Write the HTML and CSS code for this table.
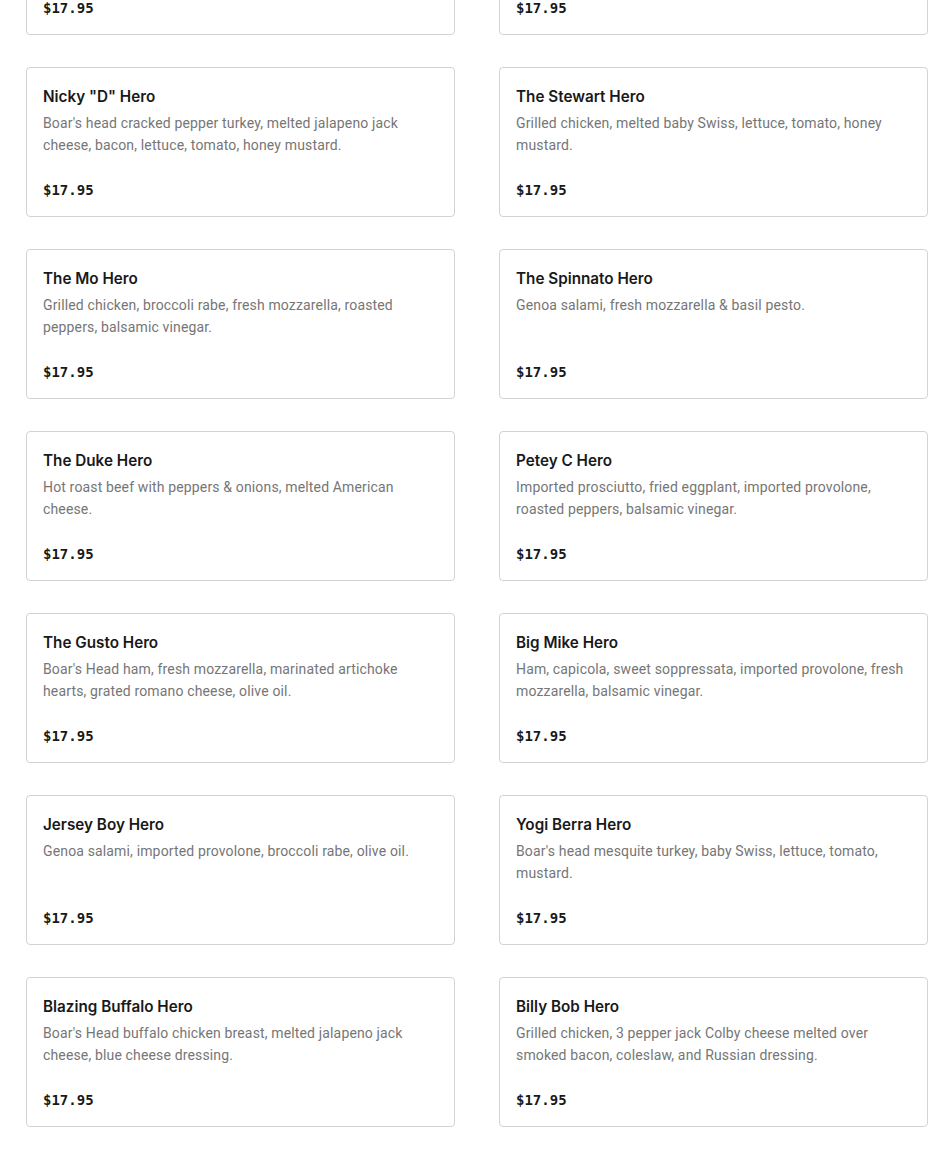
FILE: index.html
```html
<!DOCTYPE html>
<html lang="en">
<head>
<meta charset="utf-8">
<title>Heroes</title>
<link rel="stylesheet" href="styles.css">
</head>
<body>
<main class="menu">
  <div class="card"><h3 class="title">The Sal Hero</h3><p class="desc">Boar's Head ham, salami, provolone, lettuce, tomato.</p><div class="price">$17.95</div></div>
  <div class="card"><h3 class="title">The Joey Hero</h3><p class="desc">Grilled chicken, fresh mozzarella, roasted peppers.</p><div class="price">$17.95</div></div>

  <div class="card"><h3 class="title">Nicky "D" Hero</h3><p class="desc">Boar's head cracked pepper turkey, melted jalapeno jack cheese, bacon, lettuce, tomato, honey mustard.</p><div class="price">$17.95</div></div>
  <div class="card"><h3 class="title">The Stewart Hero</h3><p class="desc">Grilled chicken, melted baby Swiss, lettuce, tomato, honey mustard.</p><div class="price">$17.95</div></div>

  <div class="card"><h3 class="title">The Mo Hero</h3><p class="desc">Grilled chicken, broccoli rabe, fresh mozzarella, roasted peppers, balsamic vinegar.</p><div class="price">$17.95</div></div>
  <div class="card"><h3 class="title">The Spinnato Hero</h3><p class="desc">Genoa salami, fresh mozzarella &amp; basil pesto.</p><div class="price">$17.95</div></div>

  <div class="card"><h3 class="title">The Duke Hero</h3><p class="desc">Hot roast beef with peppers &amp; onions, melted American cheese.</p><div class="price">$17.95</div></div>
  <div class="card"><h3 class="title">Petey C Hero</h3><p class="desc">Imported prosciutto, fried eggplant, imported provolone, roasted peppers, balsamic vinegar.</p><div class="price">$17.95</div></div>

  <div class="card"><h3 class="title">The Gusto Hero</h3><p class="desc">Boar's Head ham, fresh mozzarella, marinated artichoke hearts, grated romano cheese, olive oil.</p><div class="price">$17.95</div></div>
  <div class="card"><h3 class="title">Big Mike Hero</h3><p class="desc">Ham, capicola, sweet soppressata, imported provolone, fresh mozzarella, balsamic vinegar.</p><div class="price">$17.95</div></div>

  <div class="card"><h3 class="title">Jersey Boy Hero</h3><p class="desc">Genoa salami, imported provolone, broccoli rabe, olive oil.</p><div class="price">$17.95</div></div>
  <div class="card"><h3 class="title">Yogi Berra Hero</h3><p class="desc">Boar's head mesquite turkey, baby Swiss, lettuce, tomato, mustard.</p><div class="price">$17.95</div></div>

  <div class="card"><h3 class="title">Blazing Buffalo Hero</h3><p class="desc">Boar's Head buffalo chicken breast, melted jalapeno jack cheese, blue cheese dressing.</p><div class="price">$17.95</div></div>
  <div class="card"><h3 class="title">Billy Bob Hero</h3><p class="desc">Grilled chicken, 3 pepper jack Colby cheese melted over smoked bacon, coleslaw, and Russian dressing.</p><div class="price">$17.95</div></div>
</main>
</body>
</html>
```
FILE: styles.css
```css
html, body {
  margin: 0;
  padding: 0;
  background: #ffffff;
}
body {
  font-family: Roboto, "Liberation Sans", sans-serif;
  color: #191919;
  overflow: hidden;
}
.menu {
  display: grid;
  grid-template-columns: 429px 429px;
  column-gap: 44px;
  row-gap: 32px;
  padding: 0 22px 0 26px;
  margin-top: -115px;
}
.card {
  box-sizing: border-box;
  height: 150px;
  border: 1px solid #d3d3d3;
  border-radius: 4px;
  padding: 16px 16px 16px 16px;
  display: flex;
  flex-direction: column;
}
.title {
  margin: 1px 0 0 0;
  font-family: Inter, Roboto, sans-serif;
  font-size: 15.25px;
  line-height: 24px;
  font-weight: 600;
  color: #191919;
}
.desc {
  margin: 3px 0 0 0;
  font-size: 14px;
  line-height: 22px;
  letter-spacing: 0.15px;
  color: #767676;
  height: 44px;
}
.price {
  margin-top: auto;
  font-family: "DejaVu Sans Mono", "Liberation Mono", monospace;
  font-weight: 700;
  font-size: 14px;
  line-height: 20px;
  color: #191919;
}
```
